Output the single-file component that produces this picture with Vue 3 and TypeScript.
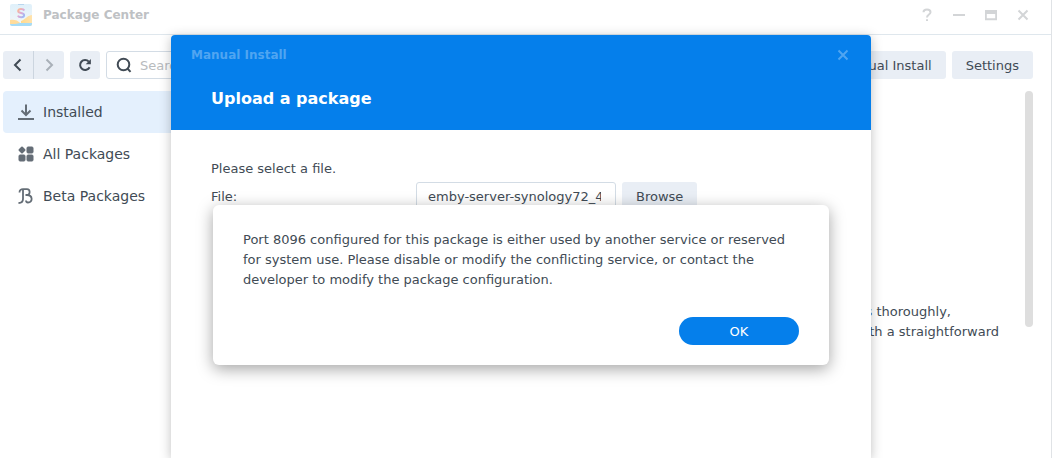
<script setup lang="ts">
import { ref } from 'vue'

interface NavItem {
  id: string
  label: string
}

const navItems: NavItem[] = [
  { id: 'installed', label: 'Installed' },
  { id: 'all', label: 'All Packages' },
  { id: 'beta', label: 'Beta Packages' },
]

const active = ref('installed')
const search = ref('')
const fileName = ref('emby-server-synology72_4')
</script>

<template>
  <div class="desktop">
    <div class="window">
      <header class="titlebar">
        <svg class="logo" width="22" height="22" viewBox="0 0 22 22" aria-hidden="true">
          <defs>
            <linearGradient id="bag" x1="0" y1="0" x2="0" y2="1">
              <stop offset="0" stop-color="#dff0fa" />
              <stop offset="1" stop-color="#f4f7f8" />
            </linearGradient>
            <linearGradient id="ess" x1="0" y1="0" x2="1" y2="1">
              <stop offset="0" stop-color="#ffb98f" />
              <stop offset="0.5" stop-color="#dba9d8" />
              <stop offset="1" stop-color="#94bdfa" />
            </linearGradient>
            <linearGradient id="sand" x1="0" y1="0" x2="1" y2="0">
              <stop offset="0" stop-color="#ffd98c" />
              <stop offset="1" stop-color="#ffe3ae" />
            </linearGradient>
            <clipPath id="tile"><rect width="22" height="22" rx="2" /></clipPath>
          </defs>
          <g clip-path="url(#tile)">
            <rect width="22" height="22" fill="url(#bag)" />
            <rect x="8" y="0" width="6" height="1" fill="#b9d6ee" />
            <path d="M22 11C18 11 16 15 11 17L11 22H22Z" fill="url(#sand)" />
            <path d="M0 17C4 16 7 18 10 19L22 19V22H0Z" fill="#a6dcf8" />
            <path d="M0 16C3 15 8 16 10 19C7 20 3 20 0 20Z" fill="#ffdc9c" />
            <path d="M14.300 6.500C13.500 4.700 8.400 4.200 8.200 7C8 9.800 14.200 8.300 14.100 11.200C14 14 8.800 13.700 7.900 11.600" fill="none" stroke="url(#ess)" stroke-width="2" />
          </g>
        </svg>
        <h1 class="app-title">Package Center</h1>
        <div class="window-controls">
          <button type="button" aria-label="Help">
            <svg width="12" height="14" viewBox="0 0 12 14"><path d="M2.500 4.200C2.500 .6 9.500 .6 9.500 4.200C9.500 6.600 6 6.500 6 9.600M6 11.200V13" /></svg>
          </button>
          <button type="button" aria-label="Minimize">
            <svg width="12" height="14" viewBox="0 0 12 14"><path d="M0 7H12" /></svg>
          </button>
          <button type="button" aria-label="Maximize">
            <svg width="12" height="14" viewBox="0 0 12 14"><path d="M.8 2.500V11.200H11.200V2.500" /><path d="M0 4H12" stroke-width="4" /></svg>
          </button>
          <button type="button" aria-label="Close">
            <svg width="12" height="14" viewBox="0 0 12 14"><path d="M1.500 2.500L10.500 11.500M10.500 2.500L1.500 11.500" /></svg>
          </button>
        </div>
      </header>

      <div class="toolbar">
        <div class="history">
          <button type="button" class="tool" aria-label="Back">
            <svg width="14" height="14" viewBox="0 0 14 14"><path d="M9.500 1.500L4 7L9.500 12.500" /></svg>
          </button>
          <button type="button" class="tool dim" aria-label="Forward">
            <svg width="14" height="14" viewBox="0 0 14 14"><path d="M4.500 1.500L10 7L4.500 12.500" /></svg>
          </button>
        </div>
        <button type="button" class="tool" aria-label="Refresh">
          <svg width="14" height="14" viewBox="0 0 14 14"><path d="M11.600 9.200A5 5 0 1 1 10.800 3.600" /><path d="M12.900 1V6.200H7.700Z" class="solid" /></svg>
        </button>
        <label class="search">
          <svg width="16" height="16" viewBox="0 0 16 16"><circle cx="7.500" cy="7.500" r="5.800" /><path d="M11.500 11.500L14.500 14.800" /></svg>
          <input v-model="search" type="text" placeholder="Search" aria-label="Search" />
        </label>
        <button type="button" class="btn push">Manual Install</button>
        <button type="button" class="btn">Settings</button>
      </div>

      <div class="body">
        <nav class="sidebar">
          <button
            v-for="item in navItems"
            :key="item.id"
            type="button"
            class="nav-item"
            :class="{ active: active === item.id }"
            @click="active = item.id"
          >
            <svg width="16" height="18" viewBox="0 0 16 18" aria-hidden="true">
              <path v-if="item.id === 'installed'" d="M8 1.500V12M3.500 7.500L8 12L12.500 7.500M0 16H16" />
              <g v-else-if="item.id === 'all'" class="blocks">
                <path d="M4 2.500L6.500 5L4 7.500L1.500 5Z" class="diamond" />
                <rect x="9" y="2" width="6" height="6" rx="1" />
                <rect x="1" y="10" width="6" height="6" rx="1" />
                <rect x="9" y="10" width="6" height="6" rx="1" />
              </g>
              <path v-else d="M1.500 5.500C1.500 3 3 2.200 5 2.200H9C12.500 2.200 12.500 8 9 8H7.500M9 8C15 8 15 15.500 10 15.500C8.500 15.500 8 14.500 8 13.500M5 2.200V12C5 15 3.500 16 .5 16" stroke-width="1.800" />
            </svg>
            <span>{{ item.label }}</span>
          </button>
        </nav>
        <main class="content">
          <div class="description">
            <p class="first">s thoroughly,</p>
            <p>th a straightforward</p>
          </div>
          <div class="scroll-thumb"></div>
        </main>
      </div>
    </div>

    <div class="overlay">
      <section class="dialog" role="dialog" aria-labelledby="dialog-title">
        <header class="dialog-head">
          <div class="dialog-bar">
            <span id="dialog-title">Manual Install</span>
            <button type="button" aria-label="Close dialog">
              <svg width="12" height="12" viewBox="0 0 12 12"><path d="M1.500 1.500L10.500 10.500M10.500 1.500L1.500 10.500" /></svg>
            </button>
          </div>
          <h2>Upload a package</h2>
        </header>
        <div class="dialog-body">
          <p>Please select a file.</p>
          <div class="file-row">
            <label for="file">File:</label>
            <input id="file" v-model="fileName" type="text" readonly />
            <button type="button" class="btn">Browse</button>
          </div>
        </div>
      </section>
    </div>

    <div class="overlay alert-layer">
      <section class="alert" role="alertdialog" aria-describedby="alert-text">
        <p id="alert-text">
          Port 8096 configured for this package is either used by another service or reserved
          for system use. Please disable or modify the conflicting service, or contact the
          developer to modify the package configuration.
        </p>
        <button type="button" class="ok">OK</button>
      </section>
    </div>
  </div>
</template>

<style>
body {
  margin: 0;
  background: #fff;
}
</style>

<style scoped>
.desktop {
  position: relative;
  box-sizing: border-box;
  height: 100vh;
  overflow: hidden;
  color: #414b55;
  font: 13px/20px Verdana, "DejaVu Sans", sans-serif;
}
.desktop * {
  box-sizing: border-box;
}
button,
input {
  margin: 0;
  padding: 0;
  border: 0;
  background: none;
  color: inherit;
  font: inherit;
}
h1,
h2,
p {
  margin: 0;
}
svg {
  flex: none;
  display: block;
  fill: none;
  stroke: currentColor;
  stroke-width: 2;
}
.window {
  display: flex;
  flex-direction: column;
  height: 100%;
  border-right: 1px solid #e0e3e6;
}
.titlebar {
  display: flex;
  align-items: center;
  height: 35px;
  padding: 0 22px 4px 10px;
  border-bottom: 1px solid #dfe7ed;
}
.logo {
  stroke: none;
}
.app-title {
  margin-left: 11px;
  color: #bec1c4;
  font-size: 12px;
  font-weight: bold;
  line-height: 20px;
}
.window-controls {
  display: flex;
  gap: 20px;
  margin-left: auto;
  color: #d3d5d7;
}
.toolbar {
  display: flex;
  gap: 6px;
  padding: 16px 18px 12px 3px;
}
.history {
  display: flex;
  overflow: hidden;
  border-radius: 3px;
}
.tool {
  display: flex;
  align-items: center;
  justify-content: center;
  width: 30px;
  height: 28px;
  border-radius: 3px;
  background: #e9eef5;
}
.history .tool {
  border-radius: 0;
}
.history .dim {
  width: 31px;
  border-left: 1px solid #ccd5df;
  color: #a9b0b8;
}
.solid {
  fill: currentColor;
  stroke: none;
}
.search {
  display: flex;
  align-items: center;
  gap: 8px;
  width: 200px;
  height: 28px;
  padding: 0 9px;
  border: 1px solid #d3dce5;
  border-radius: 3px;
}
.search input {
  flex: 1;
  min-width: 0;
  padding-top: 2px;
}
.search input::placeholder {
  color: #b8bbbe;
  opacity: 1;
}
.btn {
  height: 28px;
  padding: 2px 14px 0;
  border-radius: 3px;
  background: #e9eef5;
}
.push {
  margin-left: auto;
}
.body {
  display: flex;
  flex: 1;
  min-height: 0;
}
.sidebar {
  width: 240px;
  padding-left: 3px;
}
.nav-item {
  display: flex;
  align-items: center;
  gap: 9px;
  width: 100%;
  height: 42px;
  padding: 0 15px;
  border-radius: 4px;
  font-size: 14px;
}
.nav-item svg {
  color: #646d76;
}
.active {
  background: #e4f0fd;
}
.blocks {
  fill: currentColor;
  stroke-width: 1;
  stroke-linejoin: round;
}
.blocks .diamond {
  stroke-width: 2;
}
.content {
  display: flex;
  flex: 1;
  justify-content: flex-end;
  gap: 26px;
  padding-right: 18px;
}
.description {
  padding-top: 211px;
  text-align: right;
}
.description .first {
  padding-right: 48px;
}
.scroll-thumb {
  width: 8px;
  height: 236px;
  border-radius: 4px;
  background: #dedede;
}
.overlay {
  position: absolute;
  inset: 35px 10px 0 0;
  display: flex;
  align-items: flex-start;
  justify-content: center;
}
.dialog {
  width: 700px;
  height: 100%;
  border-radius: 4px 4px 0 0;
  background: #fff;
  box-shadow: 0 2px 12px rgba(0, 0, 0, 0.25);
}
.dialog-head {
  height: 95px;
  padding: 10px 20px;
  border-radius: 4px 4px 0 0;
  background: #057feb;
  color: #fff;
}
.dialog-bar {
  display: flex;
  align-items: center;
  justify-content: space-between;
  color: #50a5f1;
  font-size: 12px;
  font-weight: bold;
}
.dialog-bar button {
  padding: 0 2px;
}
.dialog-head h2 {
  padding: 24px 20px 0;
  font-size: 16px;
  font-weight: bold;
  line-height: 20px;
}
.dialog-body {
  padding: 29px 40px;
}
.file-row {
  display: flex;
  align-items: center;
  padding-top: 3px;
}
.file-row label {
  width: 205px;
  padding-top: 2px;
}
.file-row input {
  width: 200px;
  height: 28px;
  margin-right: 6px;
  padding: 0 14px 0 11px;
  border: 1px solid #d3dce5;
  border-radius: 3px;
}
.alert-layer {
  inset: 205px 10px auto 0;
}
.alert {
  display: flex;
  flex-direction: column;
  gap: 27px;
  width: 616px;
  padding: 25px 30px 20px;
  border-radius: 6px;
  background: #fff;
  box-shadow: 0 4px 16px rgba(0, 0, 0, 0.36);
}
.ok {
  align-self: flex-end;
  width: 120px;
  height: 28px;
  padding-top: 2px;
  border-radius: 14px;
  background: #057feb;
  color: #fff;
}
</style>
